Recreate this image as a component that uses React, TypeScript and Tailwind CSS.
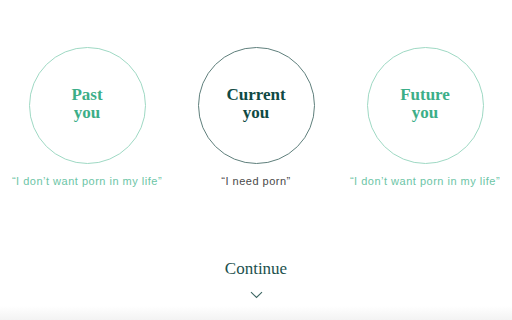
const ITEMS = [
  { title: 'Past', quote: '\u201CI don\u2019t want porn in my life\u201D', active: false },
  { title: 'Current', quote: '\u201CI need porn\u201D', active: true },
  { title: 'Future', quote: '\u201CI don\u2019t want porn in my life\u201D', active: false },
];

const serif = { fontFamily: '"Liberation Serif", "DejaVu Serif", serif' };

export default function App() {
  return (
    <div className="relative h-[320px] w-[512px] overflow-hidden bg-white">
      <div className="flex justify-center pt-[47px]">
        {ITEMS.map((it) => (
          <div key={it.title} className="flex w-[169px] flex-col items-center">
            <div
              className={
                it.active
                  ? 'flex h-[117px] w-[117px] flex-col items-center justify-center rounded-full border border-[#5f7f7c] pb-[4px] text-[#0f4a44]'
                  : 'flex h-[117px] w-[117px] flex-col items-center justify-center rounded-full border border-[#9fd9c4] pb-[4px] text-[#3cae88]'
              }
              style={serif}
            >
              <span className="block text-[17px] font-bold leading-[18px]">{it.title}</span>
              <span className="block text-[17px] font-bold leading-[18px]">you</span>
            </div>
            <p
              className={
                it.active
                  ? 'mt-[9px] text-[11px] tracking-[0.5px] text-[#4a4a4a]'
                  : 'mt-[9px] text-[11px] tracking-[0.5px] text-[#6cc5a6]'
              }
              style={{ fontFamily: '"Liberation Sans", Arial, sans-serif' }}
            >
              {it.quote}
            </p>
          </div>
        ))}
      </div>

      <div className="mt-[69px] flex flex-col items-center">
        <span className="text-[17px] leading-[20px] text-[#1b514d]" style={serif}>
          Continue
        </span>
        <svg className="mt-[12px]" width="13" height="8" viewBox="0 0 13 8" fill="none">
          <path d="M1 1.2 6.5 6.5 12 1.2" stroke="#3d6663" strokeWidth="1.1" />
        </svg>
      </div>

      <div className="absolute bottom-0 left-0 h-[14px] w-full bg-gradient-to-b from-white to-[#f3f3f3]" />
    </div>
  );
}
